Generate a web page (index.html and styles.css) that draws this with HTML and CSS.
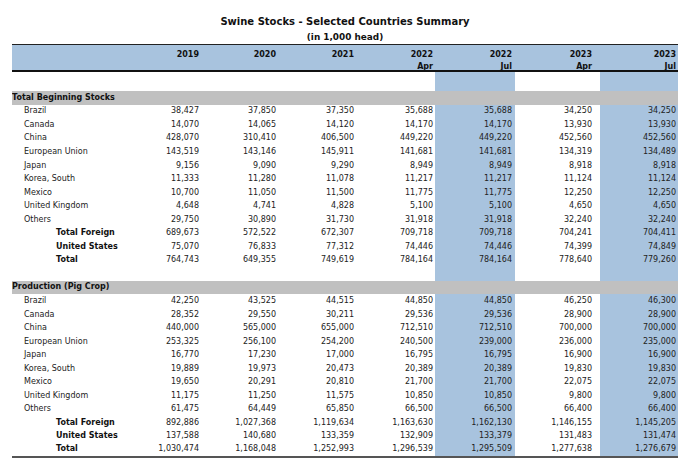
FILE: index.html
```html
<!DOCTYPE html>
<html>
<head>
<meta charset="utf-8">
<link rel="stylesheet" href="styles.css">
</head>
<body>
<div class="page">
  <div class="title">Swine Stocks - Selected Countries Summary</div>
  <div class="subtitle">(in 1,000 head)</div>
  <table class="grid">
    <colgroup>
      <col class="c-label"><col class="c-a"><col class="c-b"><col class="c-c"><col class="c-d"><col class="c-e"><col class="c-f"><col class="c-g">
    </colgroup>
    <thead>
      <tr class="h1"><th></th><th>2019</th><th>2020</th><th>2021</th><th>2022</th><th>2022</th><th>2023</th><th>2023</th></tr>
      <tr class="h2"><th></th><th></th><th></th><th></th><th>Apr</th><th>Jul</th><th>Apr</th><th>Jul</th></tr>
    </thead>
    <tbody>
      <tr class="gap top"><td></td><td></td><td></td><td></td><td></td><td></td><td></td><td></td></tr>
      <tr class="section"><td colspan="8">Total Beginning Stocks</td></tr>
      <tr><td class="lbl">Brazil</td><td>38,427</td><td>37,850</td><td>37,350</td><td>35,688</td><td>35,688</td><td>34,250</td><td>34,250</td></tr>
      <tr><td class="lbl">Canada</td><td>14,070</td><td>14,065</td><td>14,120</td><td>14,170</td><td>14,170</td><td>13,930</td><td>13,930</td></tr>
      <tr><td class="lbl">China</td><td>428,070</td><td>310,410</td><td>406,500</td><td>449,220</td><td>449,220</td><td>452,560</td><td>452,560</td></tr>
      <tr><td class="lbl">European Union</td><td>143,519</td><td>143,146</td><td>145,911</td><td>141,681</td><td>141,681</td><td>134,319</td><td>134,489</td></tr>
      <tr><td class="lbl">Japan</td><td>9,156</td><td>9,090</td><td>9,290</td><td>8,949</td><td>8,949</td><td>8,918</td><td>8,918</td></tr>
      <tr><td class="lbl">Korea, South</td><td>11,333</td><td>11,280</td><td>11,078</td><td>11,217</td><td>11,217</td><td>11,124</td><td>11,124</td></tr>
      <tr><td class="lbl">Mexico</td><td>10,700</td><td>11,050</td><td>11,500</td><td>11,775</td><td>11,775</td><td>12,250</td><td>12,250</td></tr>
      <tr><td class="lbl">United Kingdom</td><td>4,648</td><td>4,741</td><td>4,828</td><td>5,100</td><td>5,100</td><td>4,650</td><td>4,650</td></tr>
      <tr><td class="lbl">Others</td><td>29,750</td><td>30,890</td><td>31,730</td><td>31,918</td><td>31,918</td><td>32,240</td><td>32,240</td></tr>
      <tr class="sum"><td class="lbl">Total Foreign</td><td>689,673</td><td>572,522</td><td>672,307</td><td>709,718</td><td>709,718</td><td>704,241</td><td>704,411</td></tr>
      <tr class="sum"><td class="lbl">United States</td><td>75,070</td><td>76,833</td><td>77,312</td><td>74,446</td><td>74,446</td><td>74,399</td><td>74,849</td></tr>
      <tr class="sum"><td class="lbl">Total</td><td>764,743</td><td>649,355</td><td>749,619</td><td>784,164</td><td>784,164</td><td>778,640</td><td>779,260</td></tr>
      <tr class="gap"><td></td><td></td><td></td><td></td><td></td><td></td><td></td><td></td></tr>
      <tr class="section"><td colspan="8">Production (Pig Crop)</td></tr>
      <tr><td class="lbl">Brazil</td><td>42,250</td><td>43,525</td><td>44,515</td><td>44,850</td><td>44,850</td><td>46,250</td><td>46,300</td></tr>
      <tr><td class="lbl">Canada</td><td>28,352</td><td>29,550</td><td>30,211</td><td>29,536</td><td>29,536</td><td>28,900</td><td>28,900</td></tr>
      <tr><td class="lbl">China</td><td>440,000</td><td>565,000</td><td>655,000</td><td>712,510</td><td>712,510</td><td>700,000</td><td>700,000</td></tr>
      <tr><td class="lbl">European Union</td><td>253,325</td><td>256,100</td><td>254,200</td><td>240,500</td><td>239,000</td><td>236,000</td><td>235,000</td></tr>
      <tr><td class="lbl">Japan</td><td>16,770</td><td>17,230</td><td>17,000</td><td>16,795</td><td>16,795</td><td>16,900</td><td>16,900</td></tr>
      <tr><td class="lbl">Korea, South</td><td>19,889</td><td>19,973</td><td>20,473</td><td>20,389</td><td>20,389</td><td>19,830</td><td>19,830</td></tr>
      <tr><td class="lbl">Mexico</td><td>19,650</td><td>20,291</td><td>20,810</td><td>21,700</td><td>21,700</td><td>22,075</td><td>22,075</td></tr>
      <tr><td class="lbl">United Kingdom</td><td>11,175</td><td>11,250</td><td>11,575</td><td>10,850</td><td>10,850</td><td>9,800</td><td>9,800</td></tr>
      <tr><td class="lbl">Others</td><td>61,475</td><td>64,449</td><td>65,850</td><td>66,500</td><td>66,500</td><td>66,400</td><td>66,400</td></tr>
      <tr class="sum"><td class="lbl">Total Foreign</td><td>892,886</td><td>1,027,368</td><td>1,119,634</td><td>1,163,630</td><td>1,162,130</td><td>1,146,155</td><td>1,145,205</td></tr>
      <tr class="sum"><td class="lbl">United States</td><td>137,588</td><td>140,680</td><td>133,359</td><td>132,909</td><td>133,379</td><td>131,483</td><td>131,474</td></tr>
      <tr class="sum last"><td class="lbl">Total</td><td>1,030,474</td><td>1,168,048</td><td>1,252,993</td><td>1,296,539</td><td>1,295,509</td><td>1,277,638</td><td>1,276,679</td></tr>
    </tbody>
  </table>
</div>
</body>
</html>
```

FILE: styles.css
```css
html, body {
  margin: 0;
  padding: 0;
  background: #ffffff;
}

.page {
  width: 666px;
  padding: 13px 0 0 12px;
  font-family: "DejaVu Sans", Verdana, sans-serif;
  color: #111;
}

.title {
  font-size: 10px;
  font-weight: bold;
  text-align: center;
  height: 17px;
  line-height: 17px;
}

.subtitle {
  font-size: 8.9px;
  font-weight: bold;
  text-align: center;
  height: 14px;
  line-height: 14px;
}

.grid {
  width: 666px;
  border-collapse: collapse;
  table-layout: fixed;
  font-size: 8px;
}

.c-label { width: 111px; }
.c-a { width: 78px; }
.c-b { width: 77px; }
.c-c { width: 78px; }
.c-d { width: 79px; }
.c-e { width: 80px; }
.c-f { width: 85px; }
.c-g { width: 78px; }

.grid th,
.grid td {
  padding: 0 2px 0 0;
  text-align: right;
  white-space: nowrap;
  overflow: hidden;
}

.grid td:nth-child(6),
.grid th:nth-child(6) { padding-right: 3px; }
.grid td:nth-child(7),
.grid th:nth-child(7) { padding-right: 8px; }

.grid thead tr {
  background: #a8c3de;
}

.grid thead th {
  font-weight: bold;
  color: #111;
}

.grid .h1 th {
  border-top: 1px solid #222;
  height: 15px;
  vertical-align: bottom;
  line-height: 11px;
}

.grid .h2 th {
  border-bottom: 2px solid #111;
  height: 10px;
  line-height: 7px;
  vertical-align: bottom;
}

.grid tbody tr {
  height: 13.55px;
}

.grid tbody td {
  line-height: 10px;
  color: #222;
}

.grid tbody tr.top {
  height: 20px;
}

.grid tbody td:nth-child(6),
.grid tbody td:nth-child(8) {
  background: #a8c3de;
}

.grid tr.section td {
  background: #c0c0c0;
  text-align: left;
  font-weight: bold;
  color: #111;
  padding: 0;
}

.grid td.lbl {
  text-align: left;
  padding-left: 12px;
  color: #222;
}

.grid tr.sum td.lbl {
  font-weight: bold;
  padding-left: 44px;
  color: #111;
}

.grid tr.last td {
  border-bottom: 2px solid #555;
}
```
